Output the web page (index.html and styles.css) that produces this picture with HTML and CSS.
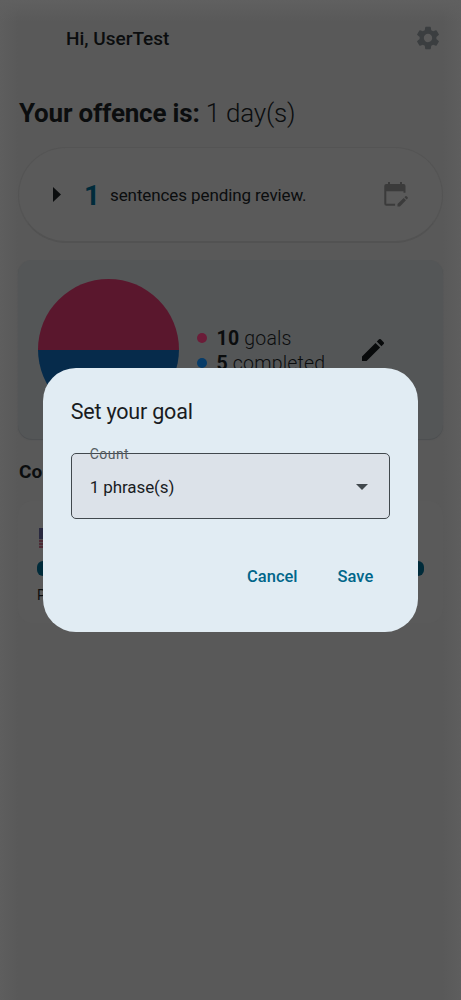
FILE: index.html
```html
<!DOCTYPE html>
<html lang="en">
<head>
<meta charset="utf-8">
<title>Set your goal</title>
<link rel="stylesheet" href="styles.css">
</head>
<body>
<main class="screen">
  <header class="topbar">
    <span class="greeting">Hi, UserTest</span>
    <svg class="gear" viewBox="0 0 24 24"><path d="M19.14 12.94c.04-.3.06-.61.06-.94 0-.32-.02-.64-.07-.94l2.03-1.58a.49.49 0 0 0 .12-.61l-1.92-3.32a.49.49 0 0 0-.59-.22l-2.39.96c-.5-.38-1.03-.7-1.62-.94l-.36-2.54a.48.48 0 0 0-.48-.41h-3.84a.47.47 0 0 0-.47.41l-.36 2.54c-.59.24-1.13.57-1.62.94l-2.39-.96a.48.48 0 0 0-.59.22L2.74 8.87a.47.47 0 0 0 .12.61l2.03 1.58c-.05.3-.09.63-.09.94s.02.64.07.94l-2.03 1.58a.49.49 0 0 0-.12.61l1.92 3.32c.12.22.37.29.59.22l2.39-.96c.5.38 1.03.7 1.62.94l.36 2.54c.05.24.24.41.48.41h3.84c.24 0 .44-.17.47-.41l.36-2.54c.59-.24 1.13-.56 1.62-.94l2.39.96c.22.08.47 0 .59-.22l1.92-3.32a.47.47 0 0 0-.12-.61l-2.01-1.58zM12 15.6A3.61 3.61 0 0 1 8.4 12c0-1.98 1.62-3.6 3.6-3.6s3.6 1.62 3.6 3.6-1.62 3.6-3.6 3.6z"/></svg>
  </header>
  <h1 class="streak"><b>Your offence is:</b> 1 day(s)</h1>
  <section class="pending">
    <svg class="play" viewBox="0 0 8 15"><path d="M0 0l8 7.5L0 15z"/></svg>
    <span class="pending-count">1</span>
    <span class="pending-text">sentences pending review.</span>
    <svg class="calendar" viewBox="0 0 24 26"><path d="M4 0h2v2h10V0h2v2h1.500a2 2 0 0 1 2 2v6.700h-2V9.300H2.300v12.400h8.800v2H2.300a2 2 0 0 1-2-2V4a2 2 0 0 1 2-2H4z"/><path d="M13.500 22.100l6.200-6.100 2.300 2.300-6.100 6.200h-2.400zM20.500 15.200l.9-.9q.6-.6 1.200 0l1 1q.6.600 0 1.200l-.9.900z"/></svg>
  </section>
  <section class="goals">
    <div class="pie"></div>
    <ul class="legend">
      <li><i class="dot dot-goal"></i><span><b>10</b> goals</span></li>
      <li><i class="dot dot-done"></i><span><b>5</b> completed</span></li>
    </ul>
    <svg class="pencil" viewBox="3 3 18 18"><path d="M3 17.250V21h3.750L17.810 9.940l-3.750-3.750L3 17.250zM20.710 7.040a1 1 0 0 0 0-1.410l-2.340-2.340a1 1 0 0 0-1.410 0l-1.830 1.830 3.750 3.750 1.830-1.830z"/></svg>
  </section>
  <h2 class="section-title">Co</h2>
  <section class="course">
    <svg class="flag" viewBox="0 0 30 20"><path fill="#514d50" d="M0 0h30v20H0z"/><path stroke="#4c202c" stroke-width="1.600" d="M0 1h30M0 4h30M0 7h30M0 10h30M0 13h30M0 16h30M0 19h30"/><path fill="#29293f" d="M0 0h15v11H0z"/></svg>
    <div class="progress"></div>
    <span class="course-note">P</span>
  </section>
</main>
<div class="overlay">
  <section class="dialog" role="dialog">
    <h2 class="dialog-title">Set your goal</h2>
    <div class="select">
      <span class="select-label">Count</span>
      <span class="select-value">1 phrase(s)</span>
      <svg class="caret" viewBox="0 0 12 6"><path d="M0 0h12L6 6z"/></svg>
    </div>
    <div class="actions">
      <button class="action">Cancel</button>
      <button class="action">Save</button>
    </div>
  </section>
</div>
</body>
</html>
```
FILE: styles.css
```css
* { box-sizing: border-box; }
body {
  margin: 0;
  background: #595959;
  font-family: Roboto, sans-serif;
  color: #0b0d0e;
}
.screen {
  height: 1000px;
  padding: 16px 18px 0;
  overflow: hidden;
  background:
    linear-gradient(to bottom, #606060, rgba(89, 89, 89, 0) 22px),
    linear-gradient(to right, #5e5e5e, #595959 18px, #595959 443px, #5e5e5e);
}
.topbar {
  display: flex;
  align-items: center;
  justify-content: space-between;
  height: 44px;
  padding: 0 1px 0 48px;
}
.greeting {
  padding-top: 2px;
  font-size: 19px;
  font-weight: 500;
  line-height: 24px;
}
.gear { width: 28px; height: 28px; fill: #3b3e40; }
.streak {
  margin: 33px 0 0 1px;
  font-size: 26px;
  font-weight: 300;
  line-height: 40px;
  letter-spacing: -.2px;
}
.streak b { font-weight: 700; }
.pending {
  display: flex;
  align-items: center;
  height: 96px;
  margin-top: 14px;
  padding: 0 34px 0 34px;
  border: 1px solid #545454;
  border-bottom: 2px solid #525252;
  border-radius: 48px;
  background: #5a5a5a;
}
.play { width: 8px; height: 15px; fill: #0b0d0e; }
.pending-count {
  width: 26px;
  margin-left: 23px;
  padding-top: 2px;
  font-size: 28px;
  font-weight: 700;
  color: #002b3a;
}
.pending-text { padding-top: 1px; font-size: 17px; letter-spacing: -.1px; }
.calendar { width: 24px; height: 26px; margin-left: auto; fill: #3b3b3b; }
.goals {
  display: flex;
  align-items: center;
  height: 179px;
  margin-top: 17px;
  padding: 0 59px 0 19.5px;
  border-radius: 14px;
  background: #545657;
  box-shadow: 0 1px 1px #4c4e50;
}
.pie {
  width: 141px;
  height: 141px;
  border-radius: 50%;
  background: linear-gradient(#5a172d 50%, #062b4b 50%);
}
.legend {
  margin: 2px 0 0 18px;
  padding: 0;
  list-style: none;
  font-size: 19.500px;
  font-weight: 300;
  line-height: 25px;
  letter-spacing: .2px;
}
.legend b { font-weight: 700; }
.legend li { display: flex; align-items: center; gap: 10px; }
.dot { width: 10px; height: 10px; border-radius: 50%; }
.dot-goal { background: #6b1c38; }
.dot-done { background: #073c69; }
.pencil { width: 22px; height: 22px; margin-left: auto; fill: #080a0b; }
.section-title {
  margin: 18px 0 0 1px;
  font-size: 19px;
  font-weight: 700;
  line-height: 30px;
}
.course {
  height: 122px;
  margin-top: 14px;
  padding: 27px 19px 0;
  border-radius: 14px;
  background: #5a5a5a;
}
.flag { display: block; width: 30px; height: 20px; margin-left: 2px; }
.progress {
  height: 15px;
  margin-top: 13px;
  border-radius: 6px;
  background: #002b3a;
}
.course-note { display: block; margin: 9px 0 0 0; font-size: 14px; line-height: 20px; }
.overlay {
  position: absolute;
  inset: 0;
  display: grid;
  place-items: center;
}
.dialog {
  width: 375.500px;
  height: 264px;
  padding: 28px;
  border-radius: 33px;
  background: #e1ecf3;
}
.dialog-title {
  margin: 0;
  font-size: 21.500px;
  font-weight: 400;
  line-height: 32px;
  letter-spacing: -.2px;
  color: #191c1f;
}
.select {
  position: relative;
  display: flex;
  align-items: center;
  justify-content: space-between;
  height: 66px;
  margin-top: 25px;
  padding: 0 21px 0 18px;
  border: 1px solid #41484d;
  border-radius: 5px;
  background: #dce2e9;
}
.select-label {
  position: absolute;
  top: -10px;
  left: 18px;
  font-size: 14px;
  line-height: 20px;
  letter-spacing: .45px;
  color: #555c61;
}
.select-value { padding-top: 1px; font-size: 17px; letter-spacing: -.1px; color: #191c1f; }
.caret { width: 12px; height: 6px; margin-top: 1px; fill: #41484d; }
.actions {
  display: flex;
  justify-content: flex-end;
  gap: 40px;
  margin-top: 46px;
  padding-right: 17px;
}
.action {
  padding: 0;
  border: 0;
  background: none;
  font: 500 16.500px/24px Roboto, sans-serif;
  color: #00668a;
}
```
